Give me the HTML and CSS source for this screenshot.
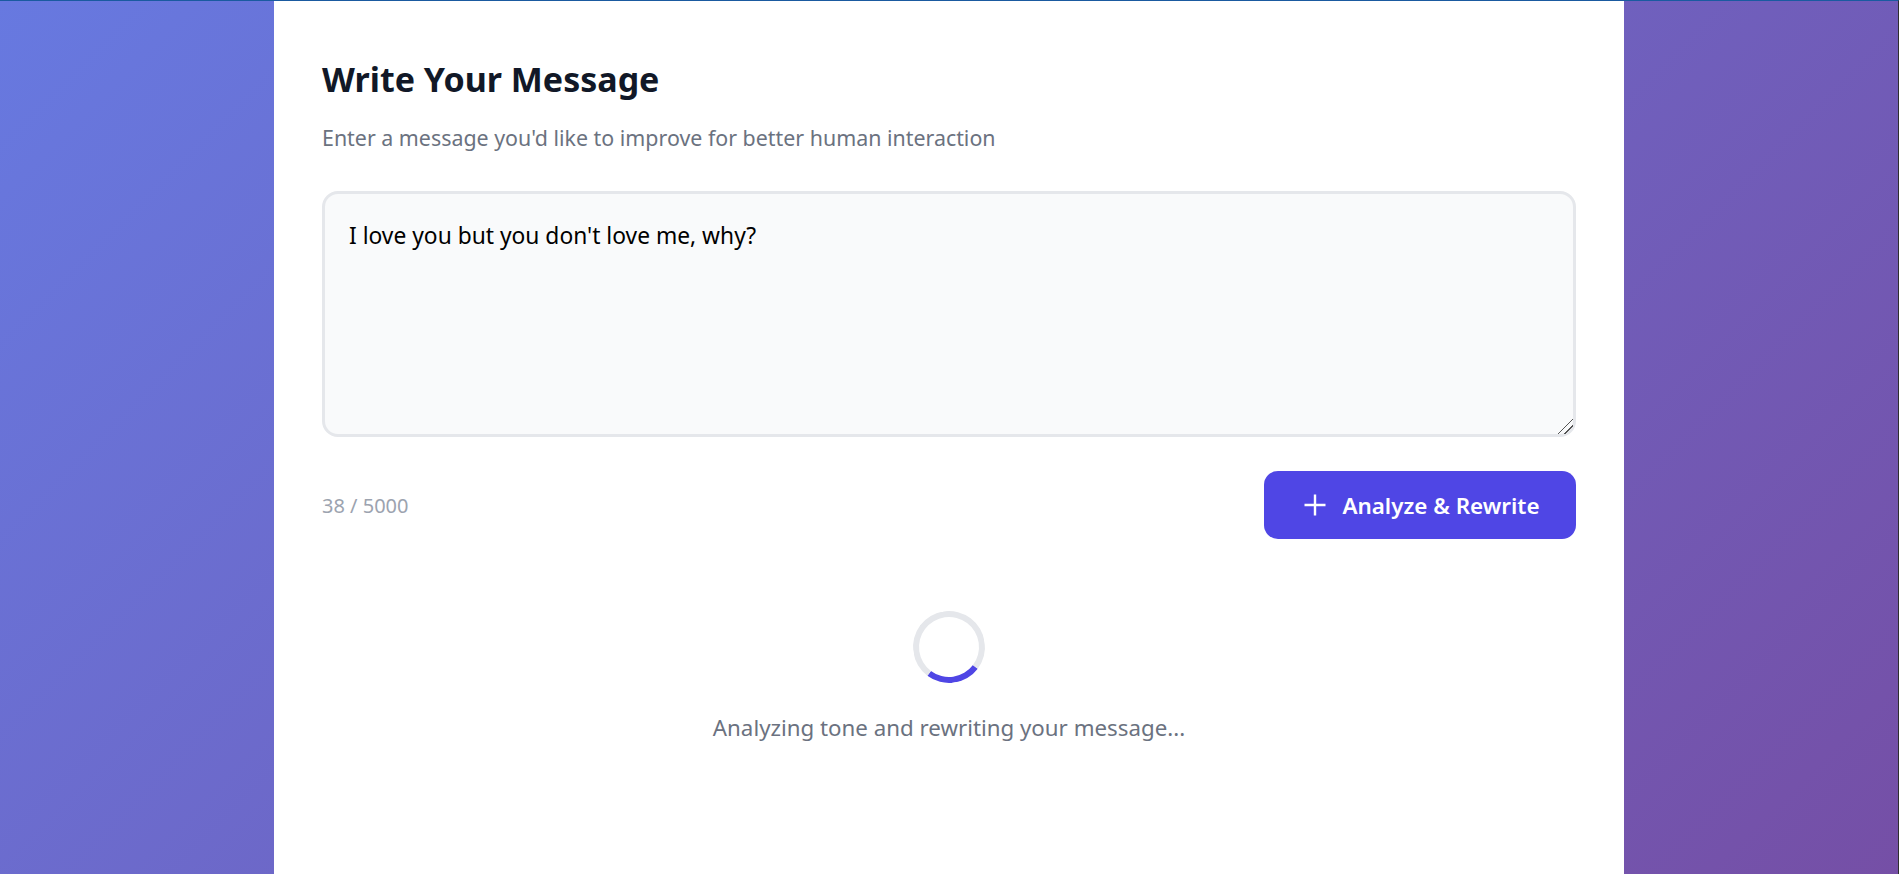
FILE: index.html
```html
<!DOCTYPE html>
<html lang="en">
<head>
<meta charset="UTF-8">
<meta name="viewport" content="width=device-width, initial-scale=1.0">
<title>Write Your Message</title>
<link rel="stylesheet" href="styles.css">
</head>
<body>
<div class="container">
<h2 class="section-title">Write Your Message</h2>
<p class="section-subtitle">Enter a message you'd like to improve for better human interaction</p>

<textarea class="message-input" maxlength="5000" spellcheck="false">I love you but you don't love me, why?</textarea>

<div class="input-footer">
<span class="char-count">38 / 5000</span>
<button class="cta-button" type="button">
<svg class="cta-icon" width="24" height="24" viewBox="0 0 24 24" fill="none" stroke="currentColor" stroke-width="2.4"><path d="M12 1.5v21M1.5 12h21"/></svg>
Analyze &amp; Rewrite
</button>
</div>

<div class="loading">
<div class="spinner"></div>
<p class="loading-text">Analyzing tone and rewriting your message...</p>
</div>
</div>
</body>
</html>
```

FILE: styles.css
```css
* {
box-sizing: border-box;
}
html, body {
height: 100%;
}
body {
font-family: "Noto Sans", "Open Sans", sans-serif;
margin: 0;
border-top: 1px solid #1a5aa0;
border-right: 1px solid #2e2e2e;
background: linear-gradient(135deg, #6779e0 0%, #754fa6 100%);
display: flex;
justify-content: center;
overflow: hidden;
}
.container {
background: white;
width: 1350px;
padding: 56px 48px 0;
}
.section-title {
font-size: 34px;
font-weight: 700;
line-height: 44px;
color: #111827;
margin: 0 0 21px;
}
.section-subtitle {
font-size: 21.4px;
line-height: 32px;
color: #6b7280;
margin: 0 0 37px;
}
.message-input {
display: block;
width: 100%;
height: 246px;
padding: 24px;
border: 3px solid #e5e7eb;
border-radius: 16px;
background-color: #f9fafb;
color: #000;
font-family: inherit;
font-size: 22.8px;
line-height: 36px;
resize: vertical;
outline: none;
}
.message-input::-webkit-resizer {
background: linear-gradient(135deg, transparent 47%, #555 47%, #555 53%, transparent 53%, transparent 70%, #555 70%, #555 76%, transparent 76%);
}
.input-footer {
display: flex;
justify-content: space-between;
align-items: center;
margin-top: 34px;
}
.char-count {
font-size: 20px;
color: #9ca3af;
}
.cta-button {
display: flex;
align-items: center;
gap: 15px;
width: 312px;
height: 68px;
padding: 0 0 0 3px;
justify-content: center;
background-color: #4f46e5;
color: white;
border: none;
border-radius: 14px;
font-family: inherit;
font-size: 22.4px;
font-weight: 600;
cursor: pointer;
}
.loading {
display: flex;
flex-direction: column;
align-items: center;
margin-top: 72px;
}
.spinner {
width: 72px;
height: 72px;
border: 6px solid #e5e7eb;
border-top-color: #4f46e5;
border-radius: 50%;
transform: rotate(172deg);
}
.loading-text {
font-size: 22.3px;
line-height: 34px;
color: #6b7280;
margin: 28px 0 0;
}
```
